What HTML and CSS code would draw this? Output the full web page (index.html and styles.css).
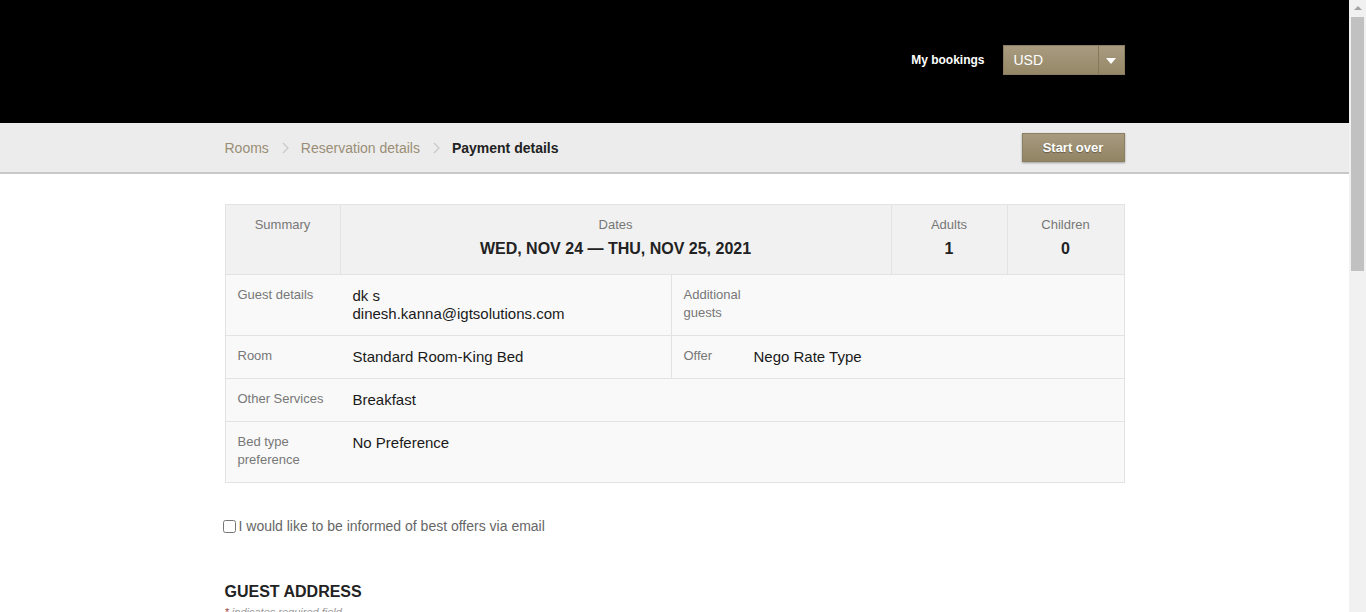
FILE: index.html
```html
<!DOCTYPE html>
<html lang="en">
<head>
<meta charset="utf-8">
<title>Payment details</title>
<link rel="stylesheet" href="styles.css">
</head>
<body>
<header class="topbar">
  <div class="wrap topbar-inner">
    <a class="my-bookings" href="#">My bookings</a>
    <div class="currency">
      <span class="currency-value">USD</span>
      <span class="currency-arrow"><svg width="10" height="6" viewBox="0 0 10 6"><path d="M0 0h10L5 6z" fill="#fff"/></svg></span>
    </div>
  </div>
</header>
<nav class="crumbbar">
  <div class="wrap crumb-inner">
    <ol class="crumbs">
      <li class="crumb">Rooms</li>
      <li class="sep"><svg width="7" height="12" viewBox="0 0 7 12"><path d="M1 1l5 5-5 5" fill="none" stroke="#c8c8c8" stroke-width="1.2"/></svg></li>
      <li class="crumb">Reservation details</li>
      <li class="sep"><svg width="7" height="12" viewBox="0 0 7 12"><path d="M1 1l5 5-5 5" fill="none" stroke="#c8c8c8" stroke-width="1.2"/></svg></li>
      <li class="crumb current">Payment details</li>
    </ol>
    <button class="start-over">Start over</button>
  </div>
</nav>
<main class="wrap">
  <section class="summary">
    <div class="sum-head">
      <div class="hcell c-summary"><span class="hlabel">Summary</span></div>
      <div class="hcell c-dates"><span class="hlabel">Dates</span><span class="hvalue">WED, NOV 24 — THU, NOV 25, 2021</span></div>
      <div class="hcell c-adults"><span class="hlabel">Adults</span><span class="hvalue">1</span></div>
      <div class="hcell c-children"><span class="hlabel">Children</span><span class="hvalue">0</span></div>
    </div>
    <div class="row split row-guest">
      <div class="half">
        <span class="label">Guest details</span>
        <span class="value">dk s<br>dinesh.kanna@igtsolutions.com</span>
      </div>
      <div class="half right">
        <span class="label">Additional<br>guests</span>
        <span class="value"></span>
      </div>
    </div>
    <div class="row split row-room">
      <div class="half">
        <span class="label">Room</span>
        <span class="value">Standard Room-King Bed</span>
      </div>
      <div class="half right">
        <span class="label short">Offer</span>
        <span class="value">Nego Rate Type</span>
      </div>
    </div>
    <div class="row row-services">
      <span class="label">Other Services</span>
      <span class="value">Breakfast</span>
    </div>
    <div class="row row-bed">
      <span class="label">Bed type<br>preference</span>
      <span class="value">No Preference</span>
    </div>
  </section>
  <label class="optin"><input type="checkbox" class="optin-box"> I would like to be informed of best offers via email</label>
  <h2 class="section-title">GUEST ADDRESS</h2>
  <p class="required-note"><span class="star">*</span> indicates required field</p>
  <div class="spacer"></div>
</main>
<div class="scrollbar" aria-hidden="true">
  <span class="sb-arrow"></span>
  <span class="sb-thumb"></span>
</div>
</body>
</html>
```

FILE: styles.css
```css
* { box-sizing: border-box; }
html, body { margin: 0; padding: 0; }
body {
  font-family: "Liberation Sans", Arial, sans-serif;
  color: #222;
  background: #fff;
  padding-right: 17px;
}
.wrap { width: 900px; margin: 0 auto; }

.topbar { background: #000; height: 123px; }
.topbar-inner {
  display: flex;
  justify-content: flex-end;
  align-items: center;
  padding-top: 45px;
  height: 75px;
}
.my-bookings {
  color: #fff;
  font-weight: bold;
  font-size: 12px;
  text-decoration: none;
  margin-right: 18px;
}
.currency {
  display: flex;
  width: 122px;
  height: 30px;
  background: linear-gradient(#a99b7f, #958868);
  border: 1px solid #8a7d60;
}
.currency-value {
  flex: 1;
  color: #fff;
  font-size: 14px;
  line-height: 28px;
  padding-left: 10px;
}
.currency-arrow {
  width: 26px;
  border-left: 1px solid #857857;
  display: flex;
  align-items: center;
  justify-content: center;
  padding-top: 1px;
}

.crumbbar {
  background: #ececec;
  height: 51px;
  border-bottom: 2px solid #c8c8c8;
}
.crumb-inner {
  display: flex;
  justify-content: space-between;
  align-items: center;
  height: 49px;
}
.crumbs {
  display: flex;
  list-style: none;
  margin: 0;
  padding: 0;
  font-size: 14px;
  align-items: center;
}
.crumb { color: #9a8e76; }
.crumb.current { color: #222; font-weight: bold; }
.sep { margin: 0 12px 0 13px; display: flex; align-items: center; }
.start-over {
  width: 103px;
  height: 29px;
  border: 1px solid #8c7f62;
  background: linear-gradient(#a89a7e, #918464);
  color: #fff;
  font-family: "Liberation Sans", Arial, sans-serif;
  font-weight: bold;
  font-size: 13px;
  text-shadow: 0 1px 1px rgba(0,0,0,.35);
  box-shadow: 0 1px 2px rgba(0,0,0,.35);
  cursor: pointer;
}

.summary {
  margin-top: 30px;
  border: 1px solid #e3e3e3;
}
.sum-head {
  display: grid;
  grid-template-columns: 114px 551px 116px 1fr;
  background: #f1f1f1;
  height: 70px;
  border-bottom: 1px solid #e3e3e3;
}
.hcell {
  display: flex;
  flex-direction: column;
  align-items: center;
  padding-top: 12px;
  border-left: 1px solid #e3e3e3;
}
.hcell:first-child { border-left: 0; }
.hlabel { font-size: 13px; color: #777; line-height: 16px; }
.hvalue { font-size: 16px; font-weight: bold; color: #222; margin-top: 7px; line-height: 18px; }

.row {
  display: flex;
  background: #f9f9f9;
  border-bottom: 1px solid #e3e3e3;
  padding: 11px 12px 0;
}
.row:last-child { border-bottom: 0; }
.row.split { padding: 0; }
.half {
  display: flex;
  padding: 11px 12px 0;
  width: 445px;
}
.half.right { flex: 1; border-left: 1px solid #e3e3e3; }
.label {
  font-size: 13px;
  color: #777;
  line-height: 18px;
  width: 115px;
  flex: none;
}
.half.right .label { width: 70px; }
.value {
  font-size: 15px;
  color: #1a1a1a;
  line-height: 18px;
  padding-top: 1px;
}
.row-guest { height: 61px; }
.row-room { height: 43px; }
.row-services { height: 43px; }
.row-bed { height: 60px; }

.optin {
  display: flex;
  align-items: center;
  margin: 35px 0 0 -2px;
  font-size: 14px;
  color: #666;
}
.optin-box { margin: 1px 3px 0 0; width: 13px; height: 13px; }

.section-title {
  font-size: 16px;
  font-weight: bold;
  margin: 49px 0 0;
  color: #222;
}
.required-note {
  margin: 5px 0 0;
  font-size: 11px;
  font-style: italic;
  color: #999;
}
.star { color: #a0403a; }
.spacer { height: 600px; }

.scrollbar {
  position: fixed;
  top: 0;
  right: 0;
  width: 17px;
  height: 100%;
  background: #f1f1f1;
}
.sb-arrow {
  position: absolute;
  top: 6px;
  left: 5px;
  width: 0;
  height: 0;
  border-left: 4px solid transparent;
  border-right: 4px solid transparent;
  border-bottom: 4px solid #a3a3a3;
}
.sb-thumb {
  position: absolute;
  top: 17px;
  left: 2px;
  width: 13px;
  height: 254px;
  background: #c1c1c1;
}
```
